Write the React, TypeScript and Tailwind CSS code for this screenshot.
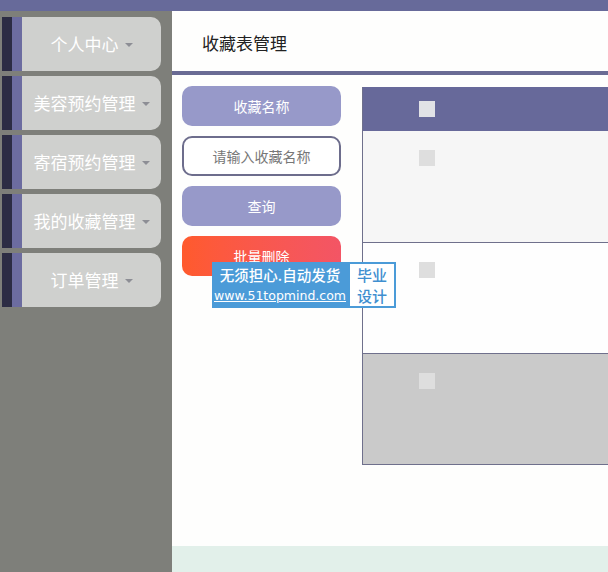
const MENU = ["个人中心", "美容预约管理", "寄宿预约管理", "我的收藏管理", "订单管理"];

const ROWS = ["bg-[#f6f6f6]", "bg-[#fefefe]", "bg-[#cacaca]"];

function MenuItem({ label }: { label: string }) {
  return (
    <div className="flex h-[54px] pl-[2px]">
      <div className="w-[10px] bg-[#2c2c44]" />
      <div className="w-[10px] bg-[#6c6ca0]" />
      <div className="flex w-[139px] items-center justify-center gap-[6px] rounded-r-[10px] bg-[#cfd0ce] text-[17px] text-white">
        <span>{label}</span>
        <span className="mt-[1px] h-0 w-0 border-x-[4px] border-t-[4px] border-x-transparent border-t-[#8d8e95]" />
      </div>
    </div>
  );
}

export default function App() {
  return (
    <div
      className="relative flex h-[572px] w-[608px] flex-col overflow-hidden bg-[#fefefd]"
      style={{ fontFamily: '"Noto Sans CJK SC", "Noto Sans", sans-serif' }}
    >
      <div className="h-[11px] shrink-0 bg-[#676a9a]" />
      <div className="flex flex-1">
        <aside className="flex w-[172px] shrink-0 flex-col gap-[5px] bg-[#7e7f7a] pt-[6px]">
          {MENU.map((m) => (
            <MenuItem key={m} label={m} />
          ))}
        </aside>

        <main className="flex flex-1 flex-col">
          <div className="flex h-[60px] items-center pl-[30px] pt-[4px] text-[17px] text-[#222]">收藏表管理</div>
          <div className="h-[4px] bg-[#6a6b94]" />

          <div className="flex flex-1 gap-[21px] pl-[10px] pt-[11px]">
            <div className="flex w-[159px] shrink-0 flex-col gap-[10px]">
              <div className="flex h-[40px] items-center justify-center rounded-[10px] bg-[#9799c9] text-[14px] text-white">
                收藏名称
              </div>
              <div className="flex h-[40px] items-center justify-center rounded-[10px] border-2 border-[#6d6d8c] bg-white text-[14px] text-[#777]">
                请输入收藏名称
              </div>
              <div className="flex h-[40px] items-center justify-center rounded-[10px] bg-[#9799c9] text-[14px] text-white">
                查询
              </div>
              <div className="flex h-[40px] items-center justify-center rounded-[10px] bg-gradient-to-r from-[#ff5a2c] to-[#f35565] text-[14px] text-white">
                批量删除
              </div>
            </div>

            <div className="flex-1 pt-[1px]">
              <div className="border-b border-l border-[#6f708c]">
                <div className="flex h-[44px] items-center bg-[#67699a] pl-[56px]">
                  <div className="h-[16px] w-[16px] bg-[#e1e2e6]" />
                </div>
                {ROWS.map((bg, i) => (
                  <div
                    key={i}
                    className={`h-[111px] border-t border-[#6f708c] pl-[56px] pt-[19px] ${bg} ${i === 0 ? "border-t-0" : ""}`}
                  >
                    <div className="h-[16px] w-[16px] bg-[#dedede]" />
                  </div>
                ))}
              </div>
            </div>
          </div>

          <div className="h-[26px] bg-[#e2f0ea]" />
        </main>
      </div>

      {/* watermark stamp */}
      <div className="absolute left-[212px] top-[262px] flex h-[46px]">
        <div className="flex w-[136px] flex-col items-center justify-center bg-[#4b9bd8] leading-none text-white">
          <span className="text-[14.5px] font-medium">无须担心.自动发货</span>
          <span className="mt-[7px] text-[12.5px] font-medium underline" style={{ fontFamily: '"DejaVu Sans", sans-serif' }}>
            www.51topmind.com
          </span>
        </div>
        <div className="flex w-[48px] items-center justify-center border-2 border-[#4b9bd8] bg-white text-center text-[15px] font-medium leading-[21px] text-[#3f8fd0]">
          <span>
            毕业
            <br />
            设计
          </span>
        </div>
      </div>
    </div>
  );
}
